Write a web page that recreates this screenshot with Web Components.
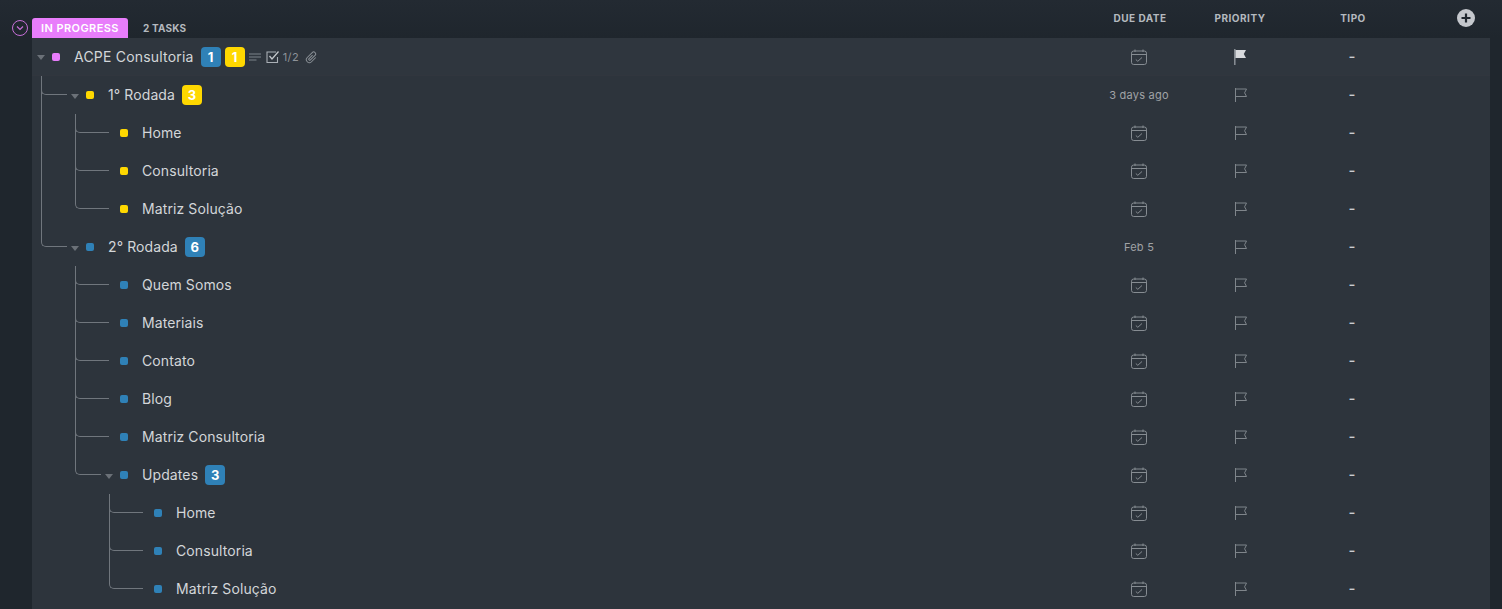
<!DOCTYPE html>
<html lang="pt">
<head>
<meta charset="utf-8">
<title>In progress</title>
<style>
html, body { margin: 0; height: 100%; background: #1f262e; overflow: hidden; }
body { font-family: Inter, "Liberation Sans", sans-serif; }
</style>
</head>
<body>
<list-board>
	<task-row name="ACPE Consultoria" color="#e87dfb" level="0" caret top flag="full" blue="1" yellow="1" extras>
		<task-row name="1° Rodada" color="#ffd800" level="1" caret yellow="3" due="3 days ago">
			<task-row name="Home" color="#ffd800" level="2"></task-row>
			<task-row name="Consultoria" color="#ffd800" level="2"></task-row>
			<task-row name="Matriz Solução" color="#ffd800" level="2" last></task-row>
		</task-row>
		<task-row name="2° Rodada" color="#2f81b7" level="1" caret last blue="6" due="Feb 5">
			<task-row name="Quem Somos" color="#2f81b7" level="2"></task-row>
			<task-row name="Materiais" color="#2f81b7" level="2"></task-row>
			<task-row name="Contato" color="#2f81b7" level="2"></task-row>
			<task-row name="Blog" color="#2f81b7" level="2"></task-row>
			<task-row name="Matriz Consultoria" color="#2f81b7" level="2"></task-row>
			<task-row name="Updates" color="#2f81b7" level="2" caret last blue="3">
				<task-row name="Home" color="#2f81b7" level="3"></task-row>
				<task-row name="Consultoria" color="#2f81b7" level="3"></task-row>
				<task-row name="Matriz Solução" color="#2f81b7" level="3" last></task-row>
			</task-row>
		</task-row>
	</task-row>
</list-board>
<script>
class ListBoardElement extends HTMLElement {
	constructor() {
		super();
		this.attachShadow({ mode: "open" });
		this.shadowRoot.innerHTML = /* html */`
		<style>
		:host {
			display: block;
			height: 609px;
			overflow: hidden;
			background: linear-gradient(#232a32, #1f262d 38px);
		}
		header {
			display: flex;
			align-items: flex-end;
			height: 38px;
			margin-right: 12px;
			font-weight: 700;
			font-size: 10px;
			color: #b4b9bf;
		}
		.toggle {
			box-sizing: border-box;
			width: 16px;
			height: 16px;
			margin: 0 4px 2px 12px;
			border: 1px solid #c66fd8;
			border-radius: 50%;
			display: flex;
			align-items: center;
			justify-content: center;
		}
		.pill {
			box-sizing: border-box;
			width: 96px;
			height: 20px;
			padding-left: 9px;
			line-height: 21px;
			font-size: 11px;
			font-weight: 600;
			letter-spacing: .42px;
			white-space: nowrap;
			color: #fff;
			background: #e87dfb;
			border-radius: 3px 3px 0 0;
		}
		.count { margin-left: 15px; line-height: 20px; letter-spacing: .2px; }
		.spacer { flex: 1; }
		.col { text-align: center; line-height: 20px; height: 20px; margin-bottom: 10px; letter-spacing: .5px; }
		.due { width: 100px; }
		.priority { width: 100px; }
		.tipo { width: 124px; padding-left: 2px; box-sizing: border-box; }
		.more { width: 76px; display: flex; padding: 0 0 11px 43px; box-sizing: border-box; }
		main { margin-right: 12px; margin-left: 32px; background: #2d343c; min-height: 571px; }
		</style>
		<header>
			<span class="toggle"><svg width="8" height="6" viewBox="0 0 8 6"><path d="M1 1.5 4 4.5 7 1.5" fill="none" stroke="#c66fd8" stroke-width="1.2"/></svg></span>
			<span class="pill">IN PROGRESS</span>
			<span class="count">2 TASKS</span>
			<span class="spacer"></span>
			<span class="col due">DUE DATE</span>
			<span class="col priority">PRIORITY</span>
			<span class="col tipo">TIPO</span>
			<span class="more"><svg width="18" height="18" viewBox="0 0 18 18"><circle cx="9" cy="9" r="9" fill="#c5c8cd"/><path d="M9 4.5v9M4.5 9h9" stroke="#20272f" stroke-width="2.2"/></svg></span>
		</header>
		<main><slot></slot></main>
		`;
	}
}

// indent of one tree level
const STEP = 34;

class TaskRowElement extends HTMLElement {
	constructor() {
		super();
		this.attachShadow({ mode: "open" });
	}

	connectedCallback() {
		const level = Number(this.getAttribute("level"));
		const color = this.getAttribute("color");
		const name = this.getAttribute("name");
		const due = this.getAttribute("due");
		const flagFull = this.getAttribute("flag") === "full";
		const caret = this.hasAttribute("caret");
		// distance from the left of the list to the square of this row
		const left = 20 + level * STEP;
		const badges = [["blue", "#2f81b7"], ["yellow", "#ffd800"]]
			.filter(([key]) => this.hasAttribute(key))
			.map(([key, bg]) => `<span class="badge" style="background:${bg}">${this.getAttribute(key)}</span>`)
			.join("");
		const extras = this.hasAttribute("extras") ? /* html */`
			<span class="extras">
				<svg width="12" height="8" viewBox="0 0 12 8"><path d="M0 1h12M0 4h12M0 7h7.5" stroke="#7d838a" stroke-width="1"/></svg>
				<svg width="14" height="14" viewBox="0 0 14 14" class="chk"><path d="M11.5 7v5.5h-10.5v-10.5h9" fill="none" stroke="#aab0b6" stroke-width="1.1"/><path d="M3.5 6 6 9 12.5 1.5" fill="none" stroke="#c4c8cc" stroke-width="1.3"/></svg>
				<span class="frac">1/2</span>
				<svg width="13" height="13" viewBox="0 0 13 13" class="clip"><g transform="rotate(45 6.5 6.5)"><path d="M9.500 3.500v6a3 3 0 0 1-6 0V2.500a2 2 0 0 1 4 0v6.500a1 1 0 0 1-2 0V4" fill="none" stroke="#8a9096"/></g></svg>
			</span>` : "";
		const calendar = /* html */`<svg class="cal" width="16" height="16" viewBox="0 0 16 16"><rect x=".5" y="2" width="15" height="13.500" rx="2.200" fill="none" stroke="#868c92"/><path d="M.5 5.500h15M4 .5v2.500M12 .5v2.500" stroke="#868c92"/><path d="M4.800 10.500 6.800 12.300 11 8.500" fill="none" stroke="#868c92"/></svg>`;
		const flag = flagFull
			? /* html */`<svg width="12" height="16" viewBox="0 0 12 16"><path d="M.8 0v16" stroke="#8a9096" stroke-width="1.500"/><path d="M1.500 1H12L9.800 5 12 9H1.500Z" fill="#d8dadd"/></svg>`
			: /* html */`<svg class="hollow" width="12" height="14" viewBox="0 0 12 14"><path d="M.5 0v14" stroke="#7f858b"/><path d="M.5 1H11.500L9.600 4.800 11.500 8.500H.5" fill="none" stroke="#7f858b"/></svg>`;
		this.shadowRoot.innerHTML = /* html */`
		<style>
		:host { display: block; position: relative; }
		.row {
			display: flex;
			align-items: center;
			box-sizing: border-box;
			height: 38px;
			padding-left: ${left}px;
			color: #d3d6d9;
			font-size: 14px;
			position: relative;
		}
		:host([top]) .row { background: #2f363e; box-shadow: inset 0 -1px 0 #31363e; }
		.caret {
			position: absolute;
			left: ${left - 15}px;
			top: ${level === 0 ? 17 : 18}px;
			width: 0;
			height: 0;
			border: 4px solid transparent;
			border-top: 5px solid #6b7178;
			border-bottom: 0;
		}
		.square { width: 8px; height: 8px; border-radius: 2px; background: ${color}; flex: none; }
		.name { margin-left: 14px; padding-bottom: 2px; white-space: nowrap; letter-spacing: .1px; }
		:host([top]) .name { letter-spacing: .2px; }
		.badge {
			box-sizing: border-box;
			width: 20px;
			height: 20px;
			margin-left: 7px;
			border-radius: 4px;
			color: #fff;
			font-size: 13px;
			font-weight: 700;
			line-height: 20px;
			text-align: center;
		}
		.badge + .badge { margin-left: 4px; }
		.extras { display: flex; align-items: center; margin-left: 4px; color: #8e9399; font-size: 11px; }
		.chk { margin-left: 5px; }
		.frac { margin-left: 3px; letter-spacing: .4px; }
		.clip { margin-left: 6px; }
		.spacer { flex: 1; }
		.cell { display: flex; align-items: center; justify-content: center; height: 100%; }
		.due { width: 100px; padding-right: 2px; box-sizing: border-box; font-size: 11px; color: #a0a3a6; letter-spacing: .25px; }
		.cal { margin-top: -1px; }
		.priority { width: 100px; }
		.hollow { margin-left: 2px; margin-top: -1px; }
		.tipo { width: 124px; box-sizing: border-box; padding-bottom: 1px; color: #c9ccd0; font-size: 15px; font-weight: 500; }
		.gap { width: 76px; }
		.trunk {
			position: absolute;
			left: ${left - 45}px;
			top: 0;
			bottom: 0;
			width: 0;
			border-left: 1px solid #70767d;
		}
		:host([last]) .trunk { bottom: auto; height: 10px; }
		.elbow {
			position: absolute;
			left: ${left - 45}px;
			top: 9px;
			width: ${caret ? 26 : 34}px;
			height: 10px;
			box-sizing: border-box;
			border-left: 1px solid #70767d;
			border-bottom: 1px solid #70767d;
			border-bottom-left-radius: 5px;
		}
		</style>
		${level > 0 ? `<span class="trunk"></span>` : ""}
		<div class="row">
			${level > 0 ? `<span class="elbow"></span>` : ""}
			${caret ? `<span class="caret"></span>` : ""}
			<span class="square"></span>
			<span class="name">${name}</span>
			${badges}
			${extras}
			<span class="spacer"></span>
			<span class="cell due">${due || calendar}</span>
			<span class="cell priority">${flag}</span>
			<span class="cell tipo">-</span>
			<span class="gap"></span>
		</div>
		<slot></slot>
		`;
	}
}

customElements.define("list-board", ListBoardElement);
customElements.define("task-row", TaskRowElement);
</script>
</body>
</html>
